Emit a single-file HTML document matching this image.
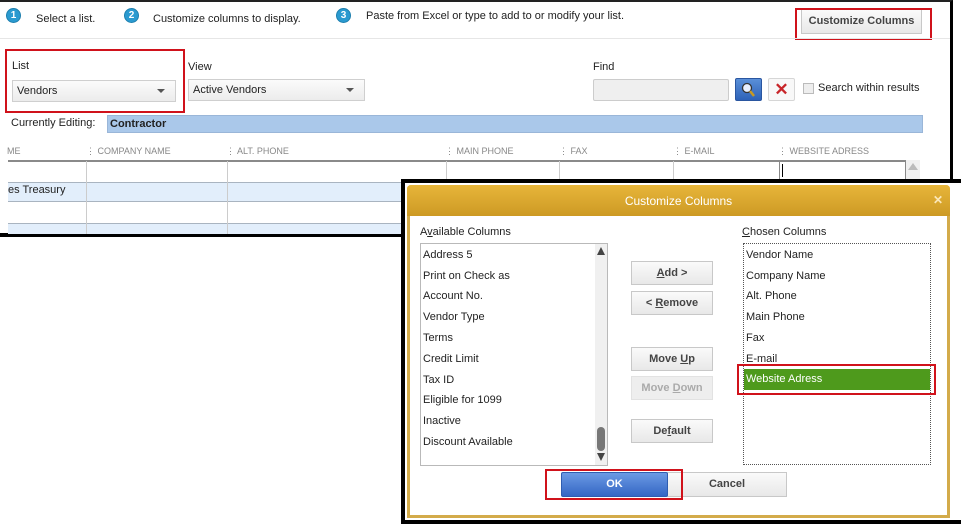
<!DOCTYPE html>
<html><head><meta charset="utf-8"><style>
*{margin:0;padding:0;box-sizing:border-box}
body{width:961px;height:524px;overflow:hidden;background:#fff;font-family:"Liberation Sans",Arial,sans-serif;font-size:11px;color:#222;position:relative}
.a{position:absolute}
.num{position:absolute;width:15px;height:15px;border-radius:50%;background:#2a9ad0;border:1px solid #1d7fae;color:#fff;font-size:10px;font-weight:bold;text-align:center;line-height:13px}
.sel{position:absolute;border:1px solid #cfcfcf;background:linear-gradient(#fbfbfb,#ececec);font-size:11px;padding:4px 4px}
.sel:after{content:"";position:absolute;right:10px;top:8px;border-left:4px solid transparent;border-right:4px solid transparent;border-top:4px solid #555}
.red{position:absolute;border:2px solid #d0121b}
.hdr{position:absolute;top:146px;font-size:9px;color:#888}
.btn{position:absolute;border:1px solid #c8c8c8;background:linear-gradient(#fafafa,#e8e8e8);text-align:center;font-weight:bold;color:#444;font-size:11px;line-height:22px}
.it{position:absolute;left:423px;font-size:11px;color:#222}
.ch{position:absolute;left:746px;font-size:11px;color:#222}
</style></head><body>
<div class="a" style="left:0;top:0;width:953px;height:237px;border-top:2px solid #222;border-right:3px solid #000;border-bottom:4px solid #000;background:#fff"></div>
<div class="num" style="left:6px;top:8px">1</div><div class="a" style="left:36px;top:13px">Select a list.</div>
<div class="num" style="left:124px;top:8px">2</div><div class="a" style="left:153px;top:13px">Customize columns to display.</div>
<div class="num" style="left:336px;top:8px">3</div><div class="a" style="left:366px;top:10px">Paste from Excel or type to add to or modify your list.</div>
<div class="btn" style="left:801px;top:9px;width:121px;height:25px">Customize Columns</div>
<div class="red" style="left:795px;top:8px;width:137px;height:32px"></div>
<div class="a" style="left:0;top:38px;width:950px;height:1px;background:#e6e6e6"></div>
<div class="a" style="left:12px;top:60px">List</div>
<div class="sel" style="left:12px;top:80px;width:164px;height:22px">Vendors</div>
<div class="red" style="left:5px;top:49px;width:180px;height:64px"></div>
<div class="a" style="left:188px;top:61px">View</div>
<div class="sel" style="left:188px;top:79px;width:177px;height:22px">Active Vendors</div>
<div class="a" style="left:593px;top:61px">Find</div>
<div class="a" style="left:593px;top:79px;width:136px;height:22px;border:1px solid #ccc;background:#efefef;border-radius:2px"></div>
<div class="a" style="left:735px;top:78px;width:27px;height:23px;background:linear-gradient(#5a8fd8,#2d62b8);border:1px solid #2a56a0;border-radius:2px">
<svg width="25" height="21" viewBox="0 0 25 21"><circle cx="11" cy="9" r="4.5" fill="#e8f0ff" stroke="#333" stroke-width="1.3"/><path d="M14 12 L18 17" stroke="#c89a20" stroke-width="2.5"/></svg></div>
<div class="a" style="left:768px;top:78px;width:27px;height:23px;background:#f8f8f8;border:1px solid #d6d6d6;border-radius:2px;color:#c8262a;font-size:17px;font-weight:bold;text-align:center;line-height:21px">✕</div>
<div class="a" style="left:803px;top:83px;width:11px;height:11px;border:1px solid #bbb;background:#eee"></div>
<div class="a" style="left:818px;top:82px">Search within results</div>
<div class="a" style="left:11px;top:117px">Currently Editing:</div>
<div class="a" style="left:107px;top:115px;width:816px;height:18px;background:#aac8ea;border:1px solid #9ab6d8;font-weight:bold;padding:2px 2px;font-size:11px">Contractor</div>
<div class="hdr" style="left:7px">ME</div>
<div class="hdr" style="left:86px">⋮ COMPANY NAME</div>
<div class="hdr" style="left:226px">⋮ ALT. PHONE</div>
<div class="hdr" style="left:445px">⋮ MAIN PHONE</div>
<div class="hdr" style="left:559px">⋮ FAX</div>
<div class="hdr" style="left:673px">⋮ E-MAIL</div>
<div class="hdr" style="left:778px">⋮ WEBSITE ADRESS</div>
<div class="a" style="left:8px;top:160px;width:898px;height:2px;background:#8a8a8a"></div>
<div class="a" style="left:8px;top:182px;width:898px;height:20px;background:#e2eefb;border-top:1px solid #a9b4c0;border-bottom:1px solid #a9b4c0"></div>
<div class="a" style="left:8px;top:223px;width:898px;height:11px;background:#e2eefb;border-top:1px solid #a9b4c0"></div>
<div class="a" style="left:86px;top:161px;width:1px;height:73px;background:#ccc"></div>
<div class="a" style="left:227px;top:161px;width:1px;height:73px;background:#ccc"></div>
<div class="a" style="left:446px;top:161px;width:1px;height:73px;background:#ccc"></div>
<div class="a" style="left:559px;top:161px;width:1px;height:73px;background:#ccc"></div>
<div class="a" style="left:673px;top:161px;width:1px;height:73px;background:#ccc"></div>
<div class="a" style="left:779px;top:161px;width:127px;height:20px;border:1px solid #888;background:#fff"></div>
<div class="a" style="left:782px;top:164px;width:1px;height:13px;background:#000"></div>
<div class="a" style="left:906px;top:160px;width:14px;height:74px;background:#f0f0f0"></div>
<div class="a" style="left:908px;top:163px;border-left:5px solid transparent;border-right:5px solid transparent;border-bottom:7px solid #bbb"></div>
<div class="a" style="left:8px;top:184px;font-size:11px">es Treasury</div>
<div class="a" style="left:401px;top:179px;width:560px;height:345px;background:#000"></div>
<div class="a" style="left:405px;top:183px;width:556px;height:337px;background:#fff"></div>
<div class="a" style="left:407px;top:185px;width:543px;height:333px;border:3px solid #d3ab4a;border-top:none;border-radius:4px 4px 0 0;background:#fff"></div>
<div class="a" style="left:407px;top:185px;width:543px;height:31px;background:linear-gradient(#e7b53a,#cd9a24);border-radius:4px 4px 0 0;color:#fff;font-size:12px;text-align:center;line-height:32px">Customize Columns</div>
<div class="a" style="left:933px;top:193px;color:#fbe7b8;font-weight:bold;font-size:12px">✕</div>
<div class="a" style="left:420px;top:226px">A<u>v</u>ailable Columns</div>
<div class="a" style="left:420px;top:243px;width:188px;height:223px;border:1px solid #b9b9b9"></div>
<div class="a" style="left:595px;top:244px;width:12px;height:221px;background:#f0f0f0"></div>
<div class="a" style="left:597px;top:247px;border-left:4px solid transparent;border-right:4px solid transparent;border-bottom:8px solid #444"></div>
<div class="a" style="left:597px;top:453px;border-left:4px solid transparent;border-right:4px solid transparent;border-top:8px solid #444"></div>
<div class="a" style="left:597px;top:427px;width:8px;height:24px;background:#777;border-radius:4px"></div>
<div class="it" style="top:249px">Address 5</div>
<div class="it" style="top:270px">Print on Check as</div>
<div class="it" style="top:290px">Account No.</div>
<div class="it" style="top:311px">Vendor Type</div>
<div class="it" style="top:332px">Terms</div>
<div class="it" style="top:353px">Credit Limit</div>
<div class="it" style="top:374px">Tax ID</div>
<div class="it" style="top:394px">Eligible for 1099</div>
<div class="it" style="top:415px">Inactive</div>
<div class="it" style="top:436px">Discount Available</div>
<div class="btn" style="left:631px;top:261px;width:82px;height:24px"><u>A</u>dd &gt;</div>
<div class="btn" style="left:631px;top:291px;width:82px;height:24px">&lt; <u>R</u>emove</div>
<div class="btn" style="left:631px;top:347px;width:82px;height:24px">Move <u>U</u>p</div>
<div class="btn" style="left:631px;top:376px;width:82px;height:24px;color:#aaa;background:#eee;border-color:#e2e2e2">Move <u>D</u>own</div>
<div class="btn" style="left:631px;top:419px;width:82px;height:24px">De<u>f</u>ault</div>
<div class="a" style="left:742px;top:226px"><u>C</u>hosen Columns</div>
<div class="a" style="left:743px;top:243px;width:188px;height:222px;border:1px dotted #555"></div>
<div class="ch" style="top:249px">Vendor Name</div>
<div class="ch" style="top:270px">Company Name</div>
<div class="ch" style="top:290px">Alt. Phone</div>
<div class="ch" style="top:311px">Main Phone</div>
<div class="ch" style="top:332px">Fax</div>
<div class="ch" style="top:353px">E-mail</div>
<div class="a" style="left:744px;top:369px;width:186px;height:21px;background:#4e9a1c;color:#fff;padding:4px 2px">Website Adress</div>
<div class="red" style="left:737px;top:364px;width:199px;height:31px"></div>
<div class="btn" style="left:667px;top:472px;width:120px;height:25px;line-height:23px">Cancel</div>
<div class="a" style="left:561px;top:472px;width:107px;height:25px;background:linear-gradient(#6b9ae4,#3466c4);border:1px solid #2f5db0;border-radius:2px;color:#fff;font-weight:bold;text-align:center;line-height:23px">OK</div>
<div class="red" style="left:545px;top:469px;width:138px;height:31px"></div>
</body></html>
